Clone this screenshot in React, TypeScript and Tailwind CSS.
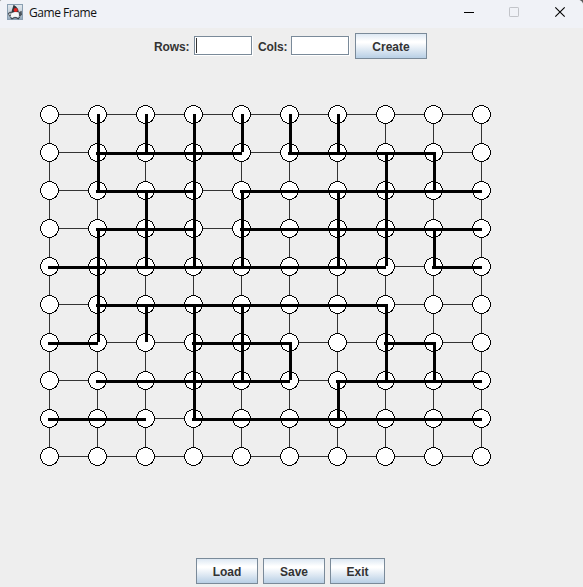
type Segment = [line: number, from: number, to: number];

const COUNT = 10;
const CELL_W = 48;
const CELL_H = 38;
const indices = Array.from({ length: COUNT }, (_, i) => i);

// [row, first column, last column]
const horizontal: Segment[] = [
  [1, 1, 4], [1, 5, 8],
  [2, 1, 3], [2, 4, 9],
  [3, 1, 3], [3, 4, 9],
  [4, 0, 7], [4, 8, 9],
  [5, 1, 7],
  [6, 0, 1], [6, 3, 5], [6, 7, 8],
  [7, 1, 5], [7, 6, 9],
  [8, 0, 2], [8, 3, 9],
];

// [column, first row, last row]
const vertical: Segment[] = [
  [1, 0, 2], [1, 3, 6],
  [2, 0, 1], [2, 2, 4], [2, 5, 6],
  [3, 0, 4], [3, 5, 8],
  [4, 0, 1], [4, 2, 4], [4, 5, 7],
  [5, 0, 1], [5, 6, 7],
  [6, 0, 1], [6, 2, 4], [6, 7, 8],
  [7, 1, 4], [7, 5, 7],
  [8, 1, 2], [8, 3, 4], [8, 6, 7],
];

const cx = (c: number) => 9 + c * CELL_W;
const cy = (r: number) => 9 + r * CELL_H;

function Board() {
  return (
    <svg width={451} height={361} viewBox="0 0 451 361" shapeRendering="crispEdges" className="block">
      <g fill="#333333">
        {indices.map((i) => (
          <g key={i}>
            <rect x={cx(0)} y={cy(i)} width={432} height={1} />
            <rect x={cx(i)} y={cy(0)} width={1} height={342} />
          </g>
        ))}
      </g>
      <g fill="#ffffff" stroke="#000000">
        {indices.map((r) =>
          indices.map((c) => <circle key={`${r}-${c}`} cx={cx(c) + 0.5} cy={cy(r) + 0.5} r={9} />),
        )}
      </g>
      <g fill="#000000">
        {horizontal.map(([r, a, b]) => (
          <rect key={`h${r}-${a}`} x={cx(a) - 1} y={cy(r)} width={(b - a) * CELL_W + 2} height={3} />
        ))}
        {vertical.map(([c, a, b]) => (
          <rect key={`v${c}-${a}`} x={cx(c)} y={cy(a)} width={3} height={(b - a) * CELL_H} />
        ))}
      </g>
    </svg>
  );
}

function JavaIcon() {
  return (
    <svg width={16} height={16} viewBox="0 0 16 16" className="block">
      <defs>
        <linearGradient id="java-bg" x1="0" y1="0" x2="0" y2="1">
          <stop offset="0" stopColor="#e3e9ee" />
          <stop offset="0.6" stopColor="#c3ced8" />
          <stop offset="1" stopColor="#8fa6ba" />
        </linearGradient>
      </defs>
      <rect x={0.5} y={0.5} width={15} height={15} fill="url(#java-bg)" stroke="#8a9fb2" />
      <path d="M6.6 0.8L9 2.6L11 5L12 8.5L9.5 8.2L5.5 9L4 9.2L5 6Z" fill="#30363c" />
      <path d="M0.8 9.2L3.2 7.6L5 9L4.6 12L2.2 12.6Z" fill="#4b545c" />
      <path d="M11.2 8.4L14.6 6.8L15 10.5L13.4 12.6L11.4 12Z" fill="#4b545c" />
      <path d="M4.4 9L8 8L11.6 8.6L12 11.5L11 13.6L9 12.8L7 12.8L5 14L3.8 12Z" fill="#f7f7f7" />
      <path d="M2.2 9.4L3.6 9L3.6 10.8L2.4 11.2Z" fill="#e4e8eb" />
      <path d="M3.4 13.4L5 14.9L7 13.8L9 13.6L11.2 14.8L12.8 13" fill="none" stroke="#3c444b" strokeWidth={1.1} />
      <circle cx={8.7} cy={6} r={2.1} fill="#e32622" />
    </svg>
  );
}

function MetalButton({ label, width }: { label: string; width: string }) {
  return (
    <button
      className={`${width} flex h-[26px] items-center justify-center border border-[#7a8a99] bg-[linear-gradient(to_bottom,#dde8f3_0%,#ffffff_30%,#ffffff_36%,#b8cfe5_100%)] pt-px font-bold leading-[14px]`}
    >
      {label}
    </button>
  );
}

function Field({ caret = false }: { caret?: boolean }) {
  return (
    <div className="mt-[3px] h-[20px] w-[59px] border-r border-b border-white">
      <div className="flex h-[19px] w-[58px] border border-[#7a8a99] bg-white py-px pl-px">
        {caret && <span className="h-full w-px bg-[#333333]" />}
      </div>
    </div>
  );
}

export default function App() {
  return (
    <div className="h-[587px] w-[583px] bg-[#5a5a5a]">
      <div className="flex h-full w-full flex-col overflow-hidden rounded-tl-[2px] rounded-tr-[5px] bg-[#eeeeee] font-['Liberation_Sans',Arial,sans-serif] text-[12px] text-[#333333]">
        <header className="flex h-[28px] shrink-0 items-start bg-[#f0f2f7] pl-[7px]">
          <div className="pt-[4px]">
            <JavaIcon />
          </div>
          <h1 className="ml-[6px] pt-[5px] font-['Open_Sans','Noto_Sans',sans-serif] text-[12px] leading-[16px] tracking-[-0.45px] text-[#111111]">
            Game Frame
          </h1>
          <svg width={104} height={12} viewBox="0 0 104 12" className="mt-[6px] ml-auto mr-[16px] block" fill="none">
            <path d="M1 6.5H11" stroke="#000000" shapeRendering="crispEdges" />
            <rect x={46.5} y={1.5} width={9} height={9} rx={0.6} stroke="#c2c4c9" />
            <path d="M92.3 1.3L101.7 10.7M101.7 1.3L92.3 10.7" stroke="#000000" strokeWidth={1.1} />
          </svg>
        </header>

        <section className="flex h-[31px] shrink-0 items-start pt-[5px] pl-[154px]">
          <label className="w-[40px] pt-[7px] font-bold leading-[14px] tracking-[-0.1px]">Rows:</label>
          <Field caret />
          <label className="ml-[5px] w-[33px] pt-[7px] font-bold leading-[14px] tracking-[-0.1px]">Cols:</label>
          <Field />
          <div className="ml-[5px]">
            <MetalButton label="Create" width="w-[72px]" />
          </div>
        </section>

        <main className="flex-1 pt-[46px] pl-[40px]">
          <Board />
        </main>

        <footer className="flex shrink-0 gap-[5px] pb-[3px] pl-[196px]">
          <MetalButton label="Load" width="w-[62px]" />
          <MetalButton label="Save" width="w-[62px]" />
          <MetalButton label="Exit" width="w-[55px]" />
        </footer>
      </div>
    </div>
  );
}
